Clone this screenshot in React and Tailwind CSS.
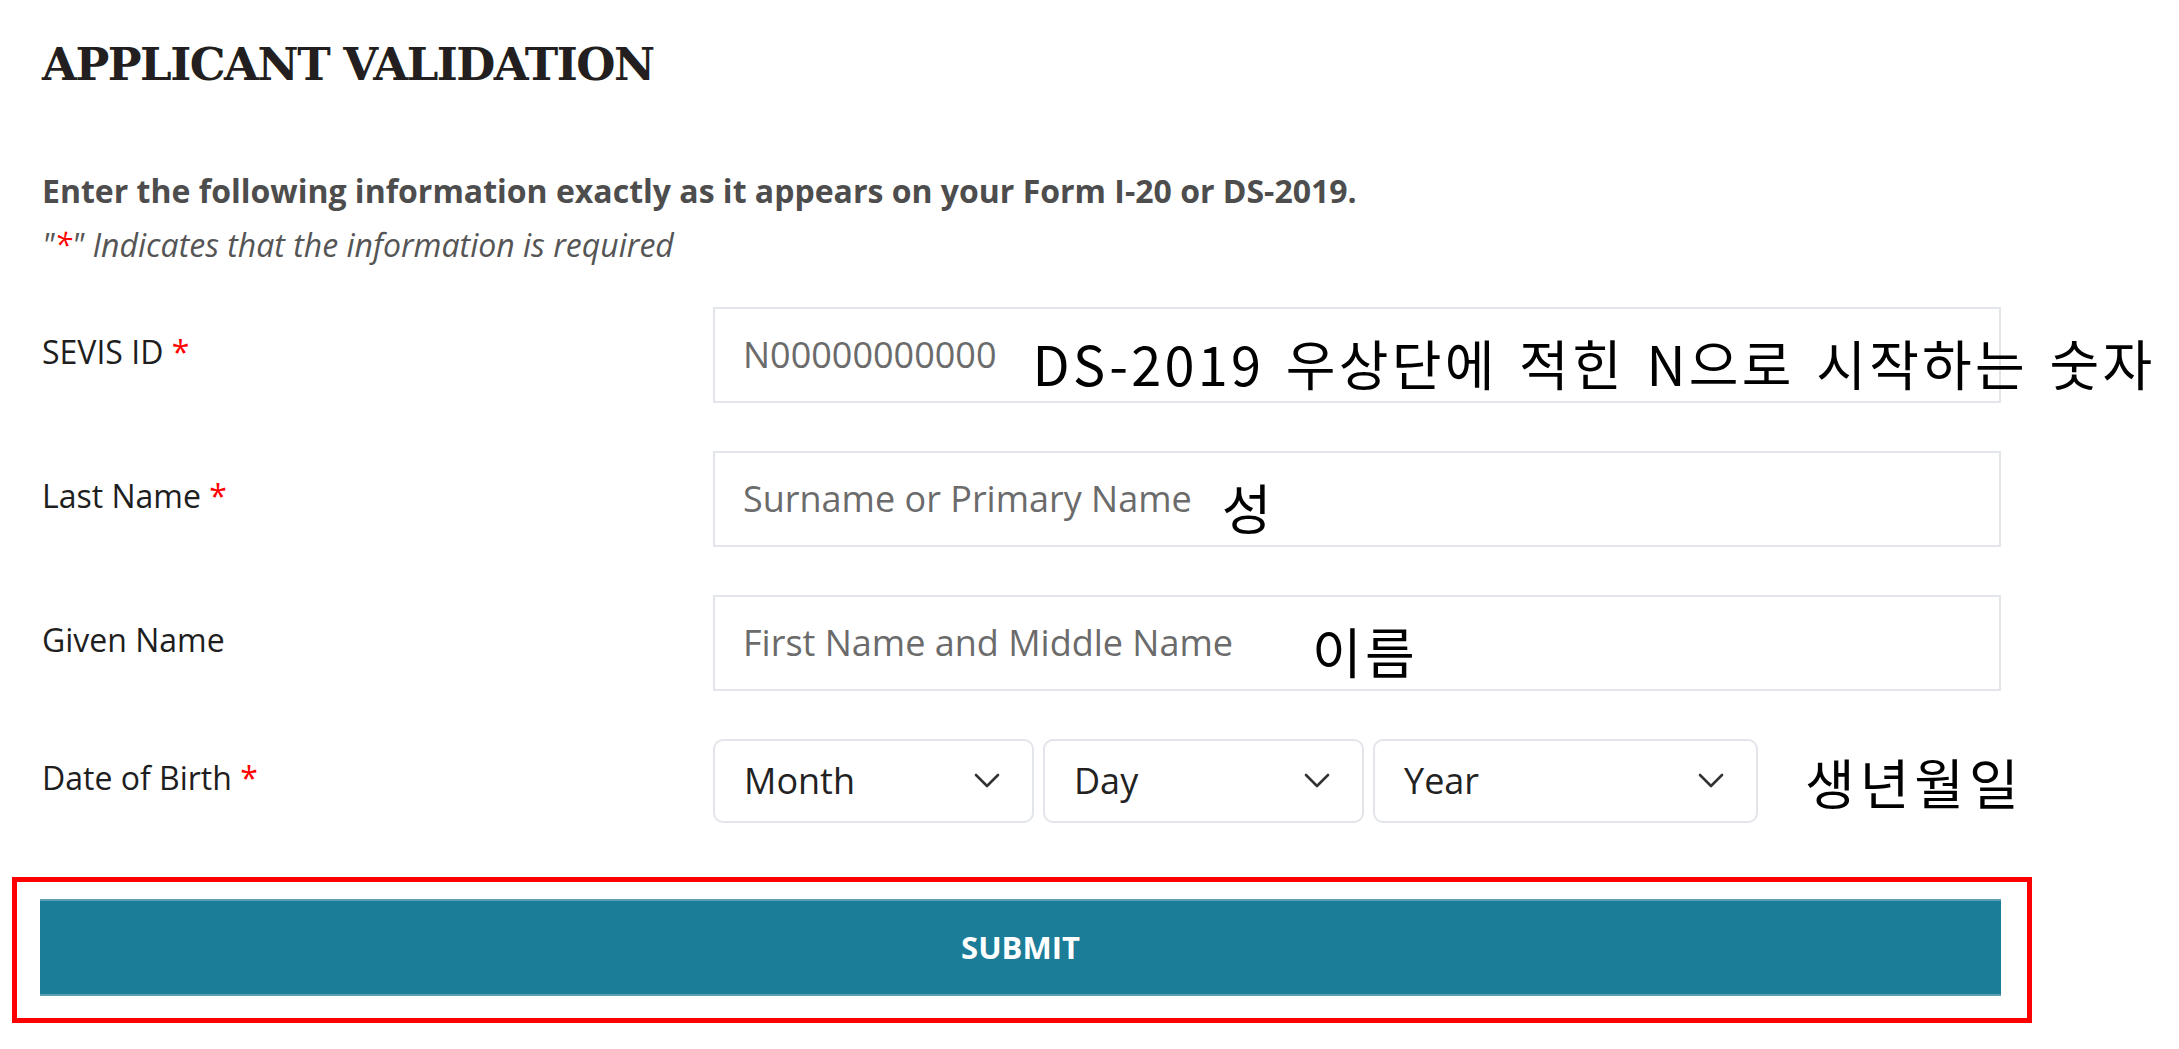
const textRows = [
    { label: "SEVIS ID", required: true, placeholder: "N00000000000", note: "DS-2019 우상단에 적힌 N으로 시작하는 숫자", gap: "ml-[36px]" },
    { label: "Last Name", required: true, placeholder: "Surname or Primary Name", note: "성", gap: "ml-[30px]" },
    { label: "Given Name", required: false, placeholder: "First Name and Middle Name", note: "이름", gap: "ml-[79px]" },
];

const selects = [
    { label: "Month", width: "w-[321px]" },
    { label: "Day", width: "w-[321px]" },
    { label: "Year", width: "w-[385px]" },
];

function Label({ text, required }) {
    return (
        <div className="w-[671px] shrink-0 text-[32px] text-[#1e1e1e] -mt-[6px]">
            {text}
            {required && <span className="text-[#ff0000]"> *</span>}
        </div>
    );
}

function Chevron() {
    return (
        <svg width="26" height="16" viewBox="0 0 26 16" fill="none">
            <polyline points="2,2 13,13 24,2" stroke="#333" strokeWidth="2.6" strokeLinecap="round" strokeLinejoin="round" />
        </svg>
    );
}

export default function App() {
    return (
        <div className="min-h-screen w-full bg-white font-['Open_Sans',sans-serif] pt-[36px]">
            {/* Heading */}
            <div className="pl-[42px]">
                <h1 className="font-['DejaVu_Serif',serif] font-bold text-[45px] leading-[58px] text-[#231f20] tracking-[-1.5px]">
                    APPLICANT VALIDATION
                </h1>
                <p className="mt-[76px] text-[32px] leading-[42px] font-bold text-[#4d4d4d]">
                    Enter the following information exactly as it appears on your Form I-20 or DS-2019.
                </p>
                <p className="mt-[12px] text-[32px] leading-[42px] italic text-[#555]">
                    "<span className="text-[#ff0000]">*</span>" Indicates that the information is required
                </p>
            </div>

            {/* Fields */}
            <div className="pl-[42px] mt-[41px] flex flex-col gap-[48px]">
                {textRows.map((row) => (
                    <div key={row.label} className="flex items-center">
                        <Label text={row.label} required={row.required} />
                        <div className="w-[1288px] h-[96px] border-2 border-[#e2e5ea] flex items-center pl-[28px] whitespace-nowrap">
                            <span className="text-[36px] text-[#6b6b6b]">{row.placeholder}</span>
                            <span className={`${row.gap} mt-[14px] font-['Noto_Sans_CJK_KR',sans-serif] text-[54px] tracking-[3.3px] [word-spacing:6px] text-black`}>
                                {row.note}
                            </span>
                        </div>
                    </div>
                ))}

                <div className="flex items-center">
                    <Label text="Date of Birth" required />
                    <div className="flex items-center gap-[9px]">
                        {selects.map((s) => (
                            <div
                                key={s.label}
                                className={`${s.width} h-[84px] border-2 border-[#e2e5ea] rounded-[10px] flex items-center justify-between pl-[29px] pr-[32px]`}
                            >
                                <span className="text-[36px] text-[#222]">{s.label}</span>
                                <Chevron />
                            </div>
                        ))}
                        <span className="ml-[38px] font-['Noto_Sans_CJK_KR',sans-serif] text-[54px] tracking-[5px] text-black">
                            생년월일
                        </span>
                    </div>
                </div>
            </div>

            {/* Submit, outlined in red */}
            <div className="ml-[12px] mt-[54px] w-[2020px] border-[5px] border-[#ff0000] pt-[17px] pb-[22px] pl-[23px] pr-[26px]">
                <button className="w-full h-[97px] bg-[#1b7d98] border-y-2 border-[#5a9fb2] text-white text-[31px] font-bold">
                    SUBMIT
                </button>
            </div>
        </div>
    );
}
